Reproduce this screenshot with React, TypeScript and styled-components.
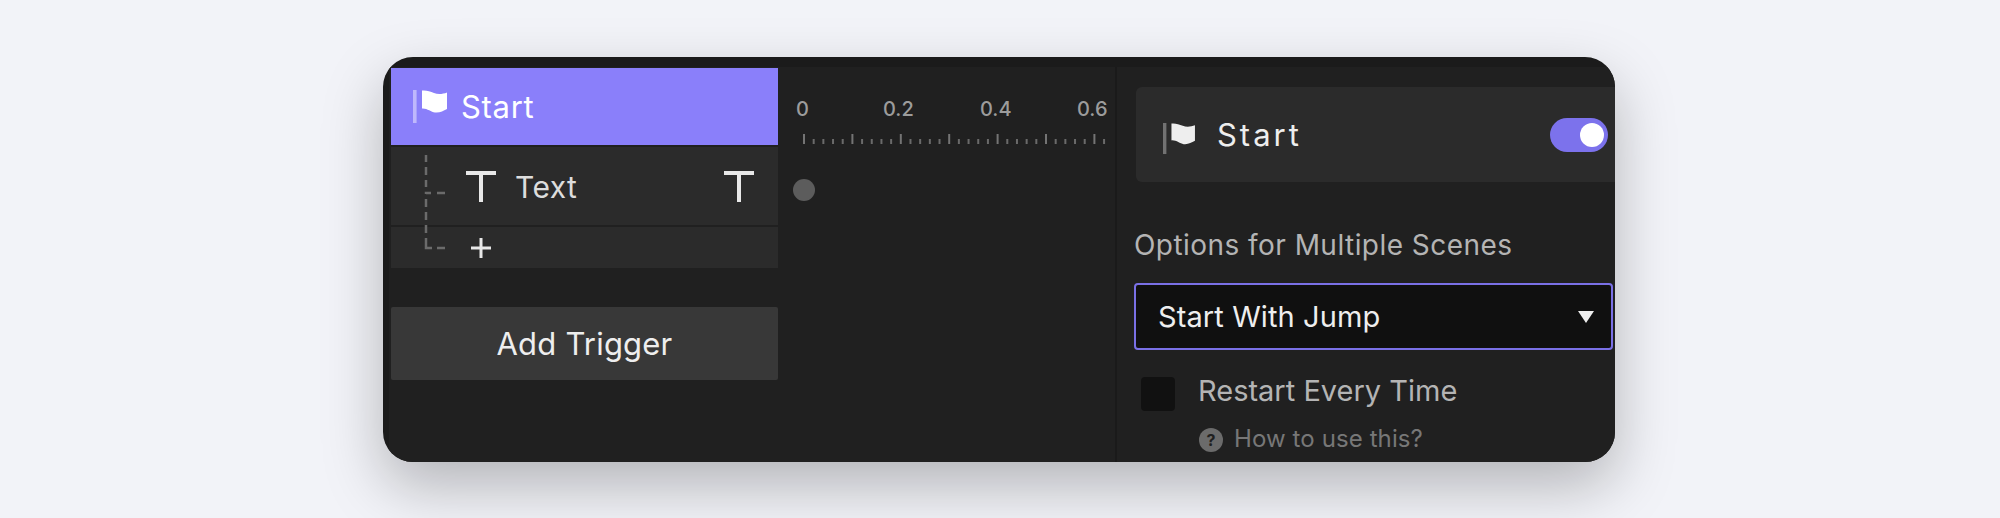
import styled, { createGlobalStyle } from 'styled-components';

const MINOR_STEP = 9.68;

const FlagIcon = ({ pole, flag, scale = 1 }: { pole: string; flag: string; scale?: number }) => (
  <svg width={34 * scale} height={33 * scale} viewBox="0 0 34 33">
    <rect x="0" y="0" width="3.6" height="33" fill={pole} />
    <path
      d="M9 .6C13 0 17 1.400 21 3c4 1.500 9 1 13-.6V19c-4 2-7 4-12 3.500-4-.5-8-4.500-13-4z"
      fill={flag}
    />
  </svg>
);

const TextIcon = () => (
  <svg width="30" height="31" viewBox="0 0 30 31">
    <path d="M0 2h30M15 2v29" stroke="#e8e8e8" strokeWidth="4" fill="none" />
  </svg>
);

const TreeLines = () => (
  <TreeSvg width="24" height="96" viewBox="0 0 24 96">
    <path
      d="M2 0v7M2 12v8M2 25v7M2 39v-1h5M13 38h8M2 44v8M2 57v8M2 70v8M2 83v10h6M13 93h8"
      stroke="#6b6b6b"
      strokeWidth="2.500"
      fill="none"
    />
  </TreeSvg>
);

const Ruler = () => {
  const ticks = Array.from({ length: 32 }, (_, i) => i);
  return (
    <RulerSvg width="313" height="12" viewBox="0 0 313 12">
      {ticks.map((i) => (
        <rect
          key={i}
          x={i * MINOR_STEP}
          y={i % 5 === 0 ? 1 : 6}
          width="2"
          height={i % 5 === 0 ? 10 : 5}
          fill={i % 5 === 0 ? '#747474' : '#6a6a6a'}
        />
      ))}
    </RulerSvg>
  );
};

const App = () => {
  return (
    <>
      <GlobalStyle />
      <Page>
        <Card>
          <Inner>
            <LeftColumn>
              <StartRow>
                <FlagIcon pole="rgba(255,255,255,0.45)" flag="#ffffff" />
                <StartLabel>Start</StartLabel>
              </StartRow>
              <TreeLines />
              <TextRow>
                <TextIcon />
                <TextLabel>Text</TextLabel>
                <RowEnd>
                  <TextIcon />
                </RowEnd>
              </TextRow>
              <PlusRow>
                <svg width="20" height="20" viewBox="0 0 20 20">
                  <path d="M0 10h20M10 0v20" stroke="#e8e8e8" strokeWidth="3" fill="none" />
                </svg>
              </PlusRow>
              <AddTrigger>Add Trigger</AddTrigger>
            </LeftColumn>

            <Timeline>
              <RulerLabels>
                <RulerLabel $first>0</RulerLabel>
                <RulerLabel>0.2</RulerLabel>
                <RulerLabel>0.4</RulerLabel>
                <RulerLabel>0.6</RulerLabel>
              </RulerLabels>
              <Ruler />
              <TrackDot />
            </Timeline>

            <RightPanel>
              <HeaderCard>
                <HeaderFlag>
                  <FlagIcon pole="#727272" flag="#eeeeee" scale={0.94} />
                </HeaderFlag>
                <HeaderTitle>Start</HeaderTitle>
                <Toggle>
                  <ToggleKnob />
                </Toggle>
              </HeaderCard>
              <SectionLabel>Options for Multiple Scenes</SectionLabel>
              <SelectBox>
                <span>Start With Jump</span>
                <SelectArrow />
              </SelectBox>
              <CheckRow>
                <CheckBox />
                <CheckLabel>Restart Every Time</CheckLabel>
              </CheckRow>
              <HelpRow>
                <HelpIcon>?</HelpIcon>
                <HelpText>How to use this?</HelpText>
              </HelpRow>
            </RightPanel>
          </Inner>
        </Card>
      </Page>
    </>
  );
};

export default App;

const GlobalStyle = createGlobalStyle`
  html, body {
    margin: 0;
    background: #f2f3f8;
  }

  body {
    font-family: Inter, "Liberation Sans", sans-serif;
  }
`;

const Page = styled.div`
  width: 2000px;
  height: 518px;
  padding: 57px 0 0 383px;
  box-sizing: border-box;
  overflow: hidden;
`;

const Card = styled.div`
  width: 1232px;
  height: 405px;
  padding: 10px 0 0 6px;
  box-sizing: border-box;
  background: #1b1b1b;
  border-radius: 30px;
  overflow: hidden;
  box-shadow: 0 24px 60px rgba(0, 0, 0, 0.26);
`;

const Inner = styled.div`
  display: grid;
  grid-template-columns: 389px 339px 1fr;
  height: 100%;
  background: #202020;
`;

const LeftColumn = styled.div`
  position: relative;
  display: flex;
  flex-direction: column;
  padding: 1px 0 0 2px;
`;

const StartRow = styled.div`
  display: flex;
  align-items: center;
  gap: 14px;
  height: 77px;
  padding: 0 0 0 22px;
  box-sizing: border-box;
  background: #8a7ffa;
`;

const StartLabel = styled.div`
  font-size: 31px;
  letter-spacing: 0.7px;
  color: #ffffff;
`;

const TreeSvg = styled.svg`
  position: absolute;
  left: 35px;
  top: 88px;
`;

const TextRow = styled.div`
  display: flex;
  align-items: center;
  height: 78px;
  margin-top: 2px;
  padding: 0 24px 0 75px;
  box-sizing: border-box;
  background: #2b2b2b;
`;

const TextLabel = styled.div`
  margin-left: 19px;
  padding-top: 2px;
  font-size: 30px;
  letter-spacing: 0.4px;
  color: #dddddd;
`;

const RowEnd = styled.div`
  display: flex;
  margin-left: auto;
`;

const PlusRow = styled.div`
  display: flex;
  align-items: center;
  height: 41px;
  margin-top: 2px;
  padding-left: 80px;
  box-sizing: border-box;
  background: #2b2b2b;
`;

const AddTrigger = styled.div`
  display: flex;
  align-items: center;
  justify-content: center;
  height: 73px;
  margin-top: 39px;
  border-radius: 2px;
  background: #383838;
  font-size: 31px;
  letter-spacing: 0.2px;
  color: #eeeeee;
`;

const Timeline = styled.div`
  display: flex;
  flex-direction: column;
  border-right: 2px solid #1a1a1a;
`;

const RulerLabels = styled.div`
  display: flex;
  padding: 30px 0 0 18px;
  font-size: 20px;
  font-weight: 500;
  line-height: 24px;
  color: #9c9c9c;
`;

const RulerLabel = styled.div<{ $first?: boolean }>`
  flex: none;
  width: ${(p) => (p.$first ? 87 : 97)}px;
`;

const RulerSvg = styled.svg`
  display: block;
  flex: none;
  margin: 12px 0 0 25px;
`;

const TrackDot = styled.div`
  width: 22px;
  height: 22px;
  margin: 34px 0 0 15px;
  border-radius: 50%;
  background: #5c5c5c;
`;

const RightPanel = styled.div`
  display: flex;
  flex-direction: column;
  padding: 20px 0 0 17px;
  min-width: 0;
`;

const HeaderCard = styled.div`
  display: flex;
  align-items: center;
  flex: none;
  height: 95px;
  margin-left: 2px;
  padding: 0 7px 0 27px;
  box-sizing: border-box;
  border-radius: 6px 0 0 6px;
  background: #2b2b2b;
`;

const HeaderFlag = styled.div`
  display: flex;
  margin-top: 9px;
`;

const HeaderTitle = styled.div`
  margin-left: 22px;
  font-size: 31px;
  letter-spacing: 3px;
  color: #eeeeee;
`;

const Toggle = styled.div`
  display: flex;
  align-items: center;
  justify-content: flex-end;
  width: 58px;
  height: 34px;
  margin-left: auto;
  padding-right: 4px;
  box-sizing: border-box;
  border-radius: 17px;
  background: #7c72ec;
`;

const ToggleKnob = styled.div`
  width: 24px;
  height: 24px;
  border-radius: 50%;
  background: #ffffff;
`;

const SectionLabel = styled.div`
  margin-top: 46px;
  font-size: 28px;
  letter-spacing: 0.45px;
  line-height: 34px;
  color: #b4b4b4;
`;

const SelectBox = styled.div`
  display: flex;
  align-items: center;
  justify-content: space-between;
  flex: none;
  width: 479px;
  height: 67px;
  margin-top: 21px;
  padding: 0 17px 0 22px;
  box-sizing: border-box;
  border: 2px solid #7a70e6;
  border-radius: 4px;
  background: #101010;
  font-size: 29px;
  letter-spacing: 0.1px;
  color: #eeeeee;
`;

const SelectArrow = styled.div`
  width: 0;
  height: 0;
  border-left: 8px solid transparent;
  border-right: 8px solid transparent;
  border-top: 12px solid #eeeeee;
`;

const CheckRow = styled.div`
  display: flex;
  align-items: flex-start;
  margin-top: 25px;
  padding-left: 7px;
`;

const CheckBox = styled.div`
  flex: none;
  width: 34px;
  height: 34px;
  margin-top: 2px;
  border-radius: 4px;
  background: #111111;
`;

const CheckLabel = styled.div`
  margin-left: 23px;
  font-size: 29px;
  line-height: 32px;
  color: #b4b4b4;
`;

const HelpRow = styled.div`
  display: flex;
  align-items: center;
  margin-top: 15px;
  padding-left: 65px;
`;

const HelpIcon = styled.div`
  display: flex;
  align-items: center;
  justify-content: center;
  flex: none;
  width: 24px;
  height: 24px;
  border-radius: 50%;
  background: #6b6b6b;
  font-size: 16px;
  font-weight: 700;
  color: #202020;
`;

const HelpText = styled.div`
  margin-left: 11px;
  margin-top: -2px;
  font-size: 24px;
  letter-spacing: 0.1px;
  color: #777777;
`;
